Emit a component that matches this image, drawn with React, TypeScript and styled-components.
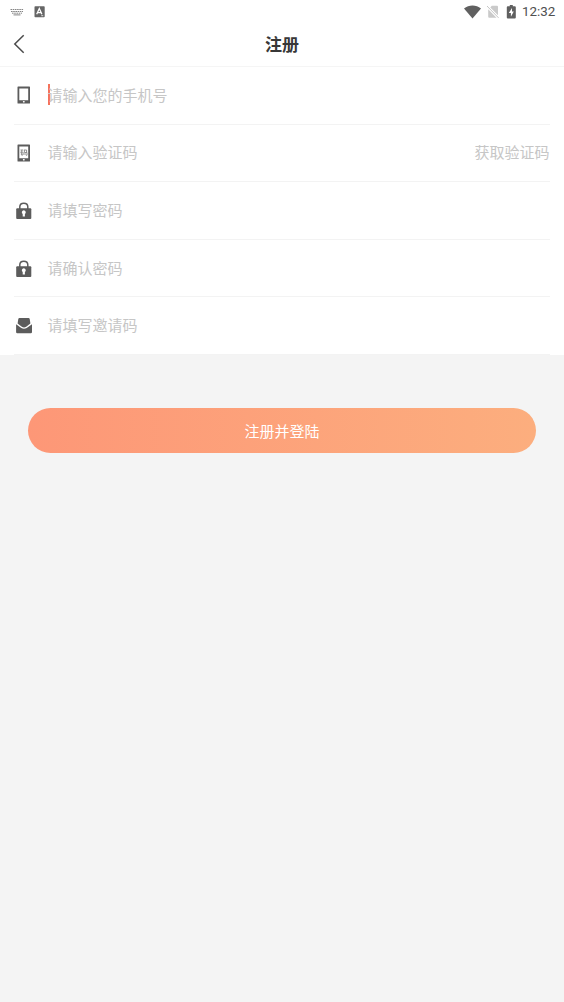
import React from "react";
import styled, { createGlobalStyle } from "styled-components";

const GlobalStyle = createGlobalStyle`
  * { box-sizing: border-box; }
  body {
    margin: 0;
    background: #f4f4f4;
    font-family: "Noto Sans CJK SC", sans-serif;
  }
`;

const Screen = styled.div`
  width: 100%;
  min-height: 1002px;
  background: #f4f4f4;
`;

const StatusBar = styled.div`
  height: 22px;
  padding: 0 8px 0 10px;
  display: flex;
  align-items: center;
  justify-content: space-between;
  background: #fff;
`;

const StatusGroup = styled.div<{ $gap: number }>`
  display: flex;
  align-items: center;
  gap: ${(p) => p.$gap}px;
  height: 22px;
  padding-top: 1px;
`;

const Clock = styled.span`
  width: 34px;
  font: 400 13.4px/22px Roboto, sans-serif;
  color: #505050;
  padding-top: 1px;
  white-space: nowrap;
`;

const Header = styled.header`
  height: 45px;
  padding: 0 13px;
  display: grid;
  grid-template-columns: 40px 1fr 40px;
  align-items: center;
  background: #fff;
  border-bottom: 1px solid #f5f5f5;
`;

const Title = styled.h1`
  margin: 0;
  text-align: center;
  font-size: 17px;
  line-height: 24px;
  font-weight: 700;
  color: #383838;
`;

const Form = styled.section`
  padding: 0 14.5px 0 14px;
  background: #fff;
`;

const Row = styled.div`
  height: 57.6px;
  display: flex;
  align-items: center;
  border-bottom: 1px solid #f3f3f3;
  font-size: 15px;
  line-height: 22px;
  color: #c6c6c6;
  font-weight: 400;
`;

const IconSlot = styled.div`
  width: 20px;
  height: 20px;
  margin-right: 13.6px;
  svg { display: block; }
`;

const Caret = styled.i`
  width: 2px;
  height: 21px;
  margin: 0 -2px 1px 0;
  background: #f5735a;
`;

const Placeholder = styled.span`
  flex: 1;
  padding-bottom: 1px;
`;

const CodeLink = styled.span`
  padding-bottom: 1px;
`;

const Actions = styled.div`
  padding: 53px 28px 0;
`;

const SubmitButton = styled.button`
  display: block;
  width: 100%;
  height: 45.5px;
  padding: 0;
  border: 0;
  border-radius: 23px;
  background: linear-gradient(90deg, #fd9777, #fcae7e);
  color: #fff;
  font: 400 15px/45px "Noto Sans CJK SC", sans-serif;
`;

const ink = "#5c5c5c";

const KeyboardIcon = () => (
  <svg width="14" height="8" viewBox="0 0 14 8" stroke="#858585" fill="none">
    <path d="M.5 1.5H13.5" strokeDasharray="1.6 .6" />
    <path d="M1 3.5H13" strokeDasharray="1.6 .6" />
    <path d="M2 5.2H12" strokeDasharray="1.6 .6" />
    <path d="M3.5 6.9H10.5" />
  </svg>
);

const InputModeIcon = () => (
  <svg width="11" height="12" viewBox="0 0 11 12">
    <rect x=".5" y=".3" width="10.2" height="11" rx=".8" fill="#666" />
    <path d="M2.7 8.3L5.3 2.5L7.9 8.3M3.7 6.6H6.9" stroke="#fff" strokeWidth="1.3" fill="none" />
    <path d="M7.3 9.7H9.2" stroke="#fff" strokeWidth=".8" />
  </svg>
);

const WifiIcon = () => (
  <svg width="17" height="14" viewBox="0 0 17 14">
    <path d="M0 3.4C4.8-.5 12.2-.5 17 3.4L8.5 13.5Z" fill="#606060" />
  </svg>
);

const NoSimIcon = () => (
  <svg width="13" height="14" viewBox="0 0 13 14">
    <path d="M4.8 .8H10Q11 .8 11 1.8V10.2L3.3 2.5ZM1.2 4.3L9.4 12.8H2.2Q1.2 12.8 1.2 11.8Z" fill="#cacaca" />
    <path d="M0 1L11.6 12.9" stroke="#c0c0c0" strokeWidth=".9" />
  </svg>
);

const BatteryIcon = () => (
  <svg width="10" height="14" viewBox="-.8 0 10 14">
    <path d="M3 0H6V1.3H8Q9 1.3 9 2.3V12.5Q9 13.5 8 13.5H1Q0 13.5 0 12.5V2.3Q0 1.3 1 1.3H3Z" fill="#606060" />
    <path d="M5.2 3.1L2 8H4.1V11.7L7 6.6H5.2Z" fill="#fff" />
  </svg>
);

const BackIcon = () => (
  <svg width="12" height="20" viewBox="0 0 12 20">
    <path d="M10.7 1.2L1.8 10L10.7 18.8" fill="none" stroke="#4b4b4b" strokeWidth="1.5" />
  </svg>
);

const PhoneIcon = ({ code = false }: { code?: boolean }) => (
  <svg width="20" height="20" viewBox="0 0 20 20">
    <path
      fillRule="evenodd"
      fill={ink}
      d="M4.1 1.5H15.4Q16 1.5 16 2.1V17.9Q16 18.5 15.4 18.5H4.1Q3.5 18.5 3.5 17.9V2.1Q3.5 1.5 4.1 1.5ZM5.3 3.5V15.3H14.2V3.5Z"
    />
    <rect x="8.9" y="16" width="1.8" height="1.5" rx=".4" fill="#fff" />
    {code && (
      <g stroke="#858585" strokeWidth=".9" fill="none">
        <path d="M6.5 7H9.3M8 7L6.7 9.7M7.4 9H9V12H7.4Z" />
        <path d="M10 7H12.6V9.5M10.4 7V9.5H13V12.2H11.9M9.7 11H12" />
      </g>
    )}
  </svg>
);

const LockIcon = () => (
  <svg width="20" height="20" viewBox="0 0 20 20">
    <path d="M5.8 9V6.8C5.8 1.9 13.8 1.9 13.8 6.8V9" fill="none" stroke={ink} strokeWidth="1.5" />
    <rect x="2.2" y="8.2" width="15.1" height="10.7" rx="1" fill={ink} />
    <path d="M9.8 10.2A2.1 2.1 0 0 1 10.9 14V16.4H8.7V14A2.1 2.1 0 0 1 9.8 10.2Z" fill="#fff" />
  </svg>
);

const EnvelopeIcon = () => (
  <svg width="20" height="20" viewBox="0 0 20 20">
    <path d="M5.4 2.1H14.6Q15.5 2.1 15.7 3L16.4 7.6L12.2 10.8Q10 12.2 7.8 10.8L3.6 7.6L4.3 3Q4.5 2.1 5.4 2.1Z" fill={ink} />
    <path d="M2.1 8.2L7.3 11.9Q10 13.4 12.7 11.9L18 8.2V16Q18 17.2 16.8 17.2H3.3Q2.1 17.2 2.1 16Z" fill={ink} />
  </svg>
);

const fields = [
  { text: "请输入您的手机号", icon: <PhoneIcon />, focused: true },
  { text: "请输入验证码", icon: <PhoneIcon code />, action: "获取验证码" },
  { text: "请填写密码", icon: <LockIcon /> },
  { text: "请确认密码", icon: <LockIcon /> },
  { text: "请填写邀请码", icon: <EnvelopeIcon /> },
];

export default function App() {
  return (
    <Screen>
      <GlobalStyle />
      <StatusBar>
        <StatusGroup $gap={10}>
          <KeyboardIcon />
          <InputModeIcon />
        </StatusGroup>
        <StatusGroup $gap={6}>
          <WifiIcon />
          <NoSimIcon />
          <BatteryIcon />
          <Clock>12:32</Clock>
        </StatusGroup>
      </StatusBar>
      <Header>
        <BackIcon />
        <Title>注册</Title>
      </Header>
      <Form>
        {fields.map((f) => (
          <Row key={f.text}>
            <IconSlot>{f.icon}</IconSlot>
            {f.focused && <Caret />}
            <Placeholder>{f.text}</Placeholder>
            {f.action && <CodeLink>{f.action}</CodeLink>}
          </Row>
        ))}
      </Form>
      <Actions>
        <SubmitButton>注册并登陆</SubmitButton>
      </Actions>
    </Screen>
  );
}
